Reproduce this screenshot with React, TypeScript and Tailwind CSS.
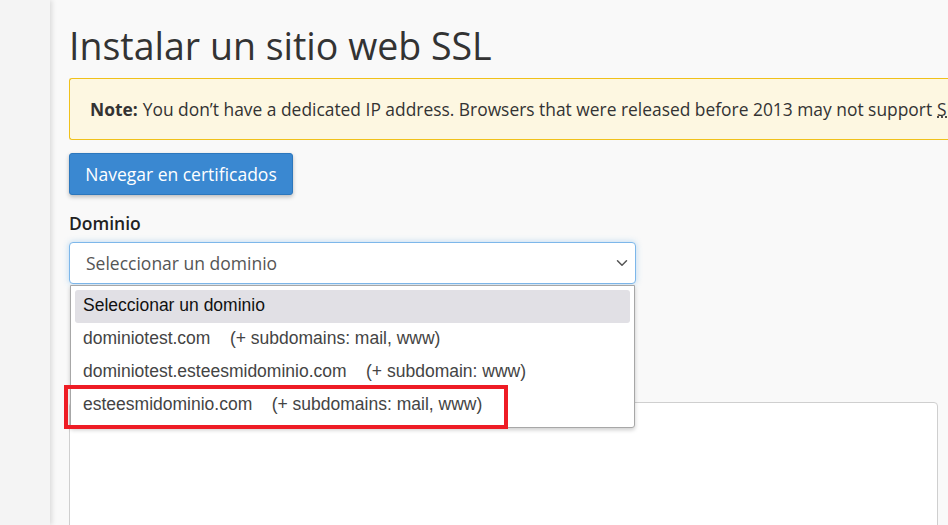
import { ChevronDown } from 'lucide-react'

const domains = [
  { name: 'dominiotest.com', subs: '(+ subdomains: mail, www)' },
  { name: 'dominiotest.esteesmidominio.com', subs: '(+ subdomain: www)' },
  { name: 'esteesmidominio.com', subs: '(+ subdomains: mail, www)' },
]

export default function App() {
  return (
    <div className="flex h-[525px] w-[948px] overflow-hidden bg-[#f9f9f9] font-['Open_Sans',sans-serif] text-[#333]">
      <aside className="w-[50px] shrink-0 bg-[#f4f4f4] shadow-[2px_0_5px_rgba(0,0,0,0.12)]" />

      <main className="flex-1 min-w-0 pl-[19px]">
        <h1 className="mt-[19px] text-[37.5px] leading-[54px] font-normal text-[#333] whitespace-nowrap">
          Instalar un sitio web SSL
        </h1>

        <div className="mt-[5px] h-[62px] flex items-center whitespace-nowrap overflow-hidden rounded-l-[3px] border border-r-0 border-[#f0c11a] bg-[#fdf7e1] pl-[20px] text-[17.4px]">
          <strong className="font-bold mr-[5px]">Note:</strong>
          You don’t have a dedicated IP address. Browsers that were released before 2013 may not support
          <abbr className="ml-[5px] underline decoration-dotted">SNI</abbr>.
        </div>

        <button className="mt-[13px] h-[42px] w-[224px] rounded-[3px] border border-[#2c77bd] bg-[#3a88d1] text-[17.5px] text-white shadow-[0_2px_4px_rgba(0,0,0,0.25)]">
          Navegar en certificados
        </button>

        <label className="mt-[15px] block text-[17.5px] font-semibold leading-[26px] text-[#222]">Dominio</label>

        <div className="relative mt-[6px] w-[567px]">
          <div className="flex h-[42px] items-center justify-between rounded-[4px] border border-[#7db7ea] bg-white pl-[16px] pr-[4px] text-[17.5px] text-[#555] shadow-[0_0_6px_rgba(102,175,233,0.45)]">
            <span>Seleccionar un dominio</span>
            <ChevronDown className="h-[18px] w-[18px] text-[#555]" strokeWidth={2} />
          </div>

          <div className="absolute left-[1px] top-[43px] z-10 w-[565px] rounded-b-[3px] border border-[#a7a7a7] bg-white px-[4px] pt-[4px] pb-[5px] font-['Liberation_Sans',Arial,sans-serif] text-[17.5px] shadow-[0_2px_4px_rgba(0,0,0,0.2)]">
            <div className="flex h-[33px] items-center rounded-[3px] bg-[#e1e0e5] px-[8px] pb-[2px] text-[#111]">
              Seleccionar un dominio
            </div>
            {domains.map((d) => (
              <div key={d.name} className="flex h-[33px] items-center whitespace-pre px-[8px] pb-[2px] text-[#444]">
                {d.name}
                {'    '}
                {d.subs}
              </div>
            ))}
            <div className="absolute left-[-7px] top-[99px] h-[44px] w-[444px] border-[4px] border-[#ee1c25]" />
          </div>
        </div>

        <div className="mt-[118px] h-[200px] w-[869px] rounded-[4px] border border-[#cfcfcf] bg-white" />
      </main>
    </div>
  )
}
